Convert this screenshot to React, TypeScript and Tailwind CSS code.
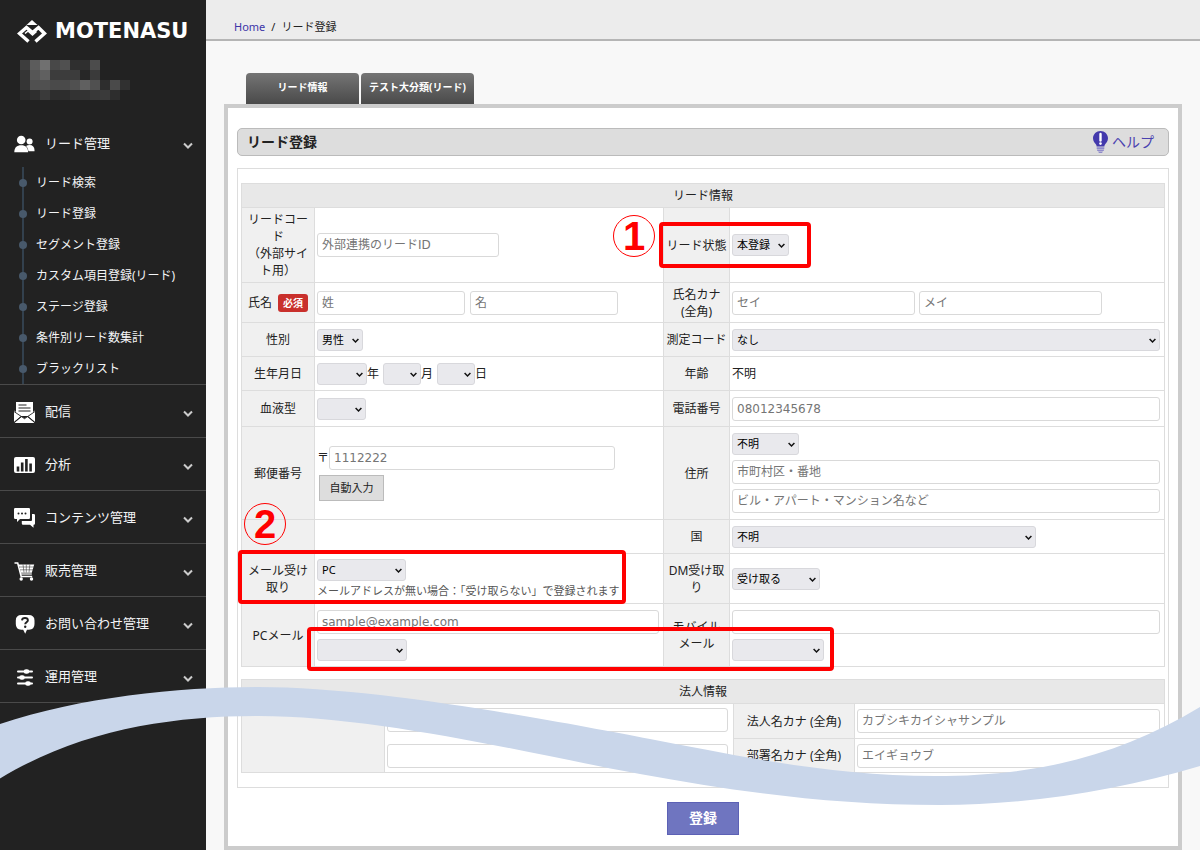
import type { ReactNode } from "react";
import { clsx } from "clsx";

const SUB_ITEMS = [
  "リード検索",
  "リード登録",
  "セグメント登録",
  "カスタム項目登録(リード)",
  "ステージ登録",
  "条件別リード数集計",
  "ブラックリスト",
];

// 10px cells of the masked account name
const MOSAIC = [
  ["#3d3d3d", "#5c5c5c", "#707070", "#484848", "#505050", "#2f2f2f", "#2f2f2f", "#4c4c4c"],
  ["#353535", "#565656", "#606060", "#3c3c3c", "#3c3c3c", "#3c3c3c", "#272727", "#3a3a3a"],
  ["#353535", "#505050", "#505050", "#4a4a4a", "#4a4a4a", "#505050", "#606060", "#505050", "#2d2d2d", "#4a4a4a", "#303030"],
  ["#2a2a2a", "#2f2f2f", "#3a3a3a", "#2d2d2d", "#2d2d2d", "#333333", "#333333", "#383838", "#3a3a3a", "#2d2d2d"],
];

function UsersIcon() {
  return (
    <svg width="21" height="18" viewBox="0 0 21 18" fill="#fff">
      <circle cx="15.6" cy="6.4" r="3" />
      <path d="M14.4 16.2c-.2-2.500-1-4.100-2.400-5.300 1-.7 2.300-1 3.600-1 3.200 0 4.900 2 4.900 5v1.300z" />
      <circle cx="7.200" cy="5" r="4.300" />
      <path d="M.3 17.300c0-4.400 2.400-7 6.900-7s6.900 2.600 6.900 7z" />
    </svg>
  );
}

function MailIcon() {
  return (
    <svg width="21" height="21" viewBox="0 0 21 21">
      <path d="M2 0h17v14H2z" fill="#fff" />
      <path d="M4.500 3h8M4.500 6h12M4.500 9h12" stroke="#222" strokeWidth="1.200" />
      <path d="M0 8.500l7 5.500-7 6zM21 8.500L14 14l7 6z" fill="#fff" />
      <path d="M.5 21l7.200-6.500 2.800 2 2.800-2L20.500 21z" fill="#fff" />
      <path d="M0 9.500l10.500 7.200L21 9.500M.3 20.200l7.300-5.700M20.700 20.200l-7.300-5.700" fill="none" stroke="#222" strokeWidth=".9" />
    </svg>
  );
}

function ChartIcon() {
  return (
    <svg width="21" height="16" viewBox="0 0 21 16">
      <rect width="21" height="16" rx="2" fill="#fff" />
      <path d="M4 14.500V9.500M8.200 14.500V5.500M12.400 14.500V2M16.600 14.500V6.500" stroke="#222" strokeWidth="2.600" />
    </svg>
  );
}

function CommentsIcon() {
  return (
    <svg width="21" height="20" viewBox="0 0 21 20" fill="#fff">
      <path d="M1.200 0h13.600q1.200 0 1.200 1.200v8.600q0 1.200-1.200 1.200H6l-3 3v-3H1.200Q0 11 0 9.800V1.200Q0 0 1.200 0z" />
      <path d="M18 6h1.800q1.200 0 1.200 1.200v8.300q0 1.200-1.200 1.200h-.3v3l-3.500-3H9q-1.200 0-1.200-1.200v-2.500H17q1 0 1-1z" />
      <circle cx="4.500" cy="5.500" r="1" fill="#222" />
      <circle cx="8" cy="5.500" r="1" fill="#222" />
      <circle cx="11.500" cy="5.500" r="1" fill="#222" />
    </svg>
  );
}

function CartIcon() {
  return (
    <svg width="21" height="19" viewBox="0 0 21 19" fill="none" stroke="#fff">
      <path d="M.5 1h3.200l3.500 13.500h11" strokeWidth="1.600" />
      <path d="M4.500 2.500h15.700l-2.400 8.300H6.800z" fill="#fff" stroke="none" />
      <path d="M5 5h15M6 7.800h13M9 2.500l1 8M12.300 2.500v8M15.800 2.500l-.8 8" stroke="#222" strokeWidth=".5" />
      <path d="M6.500 12h11.300" strokeWidth="1.200" />
      <circle cx="7.200" cy="17" r="1.700" fill="#fff" stroke="none" />
      <circle cx="17.500" cy="17" r="1.700" fill="#fff" stroke="none" />
    </svg>
  );
}

function QuestionIcon() {
  return (
    <svg width="20" height="19" viewBox="0 0 20 19">
      <path d="M6.500 0h7q6 0 6 5.500v3.500q0 5.500-5.500 5.800h-2l-1.800 4-2-4h-2Q.8 14.500.8 9V5.500Q.8 0 6.500 0z" fill="#fff" />
      <path d="M7 5.300Q7.200 3 10 3t2.900 2.300c0 2-2.700 2-2.700 4" fill="none" stroke="#222" strokeWidth="1.900" />
      <circle cx="10.200" cy="11.700" r="1.200" fill="#222" />
    </svg>
  );
}

function SlidersIcon() {
  return (
    <svg width="16" height="17" viewBox="0 0 16 17" stroke="#fff" strokeWidth="2" strokeLinecap="round">
      <path d="M1 2.500h14M1 8.500h14M1 14.500h14" />
      <path d="M9 2.500h1M4.500 8.500h1M10.500 14.500h1" strokeWidth="4.600" />
    </svg>
  );
}

const MENU: { label: string; icon: ReactNode }[] = [
  { label: "配信", icon: <MailIcon /> },
  { label: "分析", icon: <ChartIcon /> },
  { label: "コンテンツ管理", icon: <CommentsIcon /> },
  { label: "販売管理", icon: <CartIcon /> },
  { label: "お問い合わせ管理", icon: <QuestionIcon /> },
  { label: "運用管理", icon: <SlidersIcon /> },
];

function MenuButton({ label, icon }: { label: string; icon: ReactNode }) {
  return (
    <button type="button" className="flex h-[52px] w-full items-center pt-0.5 pr-[13px] pl-3.5 text-left text-[13px] text-gray-100">
      <span className="mr-2.5 flex w-[21px] justify-center">{icon}</span>
      <span className="flex-1">{label}</span>
      <svg width="10" height="8" viewBox="0 0 10 8" className="mt-1" fill="none" stroke="#ccc" strokeWidth="2">
        <path d="M1 1.500l4 4 4-4" />
      </svg>
    </button>
  );
}

function Sidebar() {
  return (
    <aside className="w-[206px] shrink-0 bg-[#222]">
      <a href="#" className="flex h-[60px] items-center gap-2 pt-0.5 pl-[17px] text-white">
        <svg width="30" height="23" viewBox="0 0 30 23" fill="none" stroke="#fff" strokeWidth="3.400">
          <path d="M15 0l5.500 5H9.500z" fill="#fff" stroke="none" />
          <path d="M11.500 21.500L2.500 13.500 9.500 7.500l6 5 6-5 6 6-9 8" />
          <path d="M8 13.500l3-2.500 4.500 4 4-3.500" strokeWidth="1.600" />
        </svg>
        <span className="font-['DejaVu_Sans',sans-serif] text-[21px] leading-6 font-bold">MOTENASU</span>
      </a>
      <svg width="120" height="40" className="ml-5" shapeRendering="crispEdges">
        {MOSAIC.map((row, y) =>
          row.map((fill, x) => <rect key={`${x}-${y}`} x={x * 10} y={y * 10} width="10" height="10" fill={fill} />)
        )}
      </svg>
      <nav className="mt-[17px]">
        <MenuButton label="リード管理" icon={<UsersIcon />} />
        <ul className="relative -mt-0.5 pl-9 before:absolute before:top-0 before:bottom-0 before:left-[22px] before:w-0.5 before:bg-[#33414e]">
          {SUB_ITEMS.map((item) => (
            <li key={item} className="relative flex h-[31px] items-center">
              <span className="absolute -left-[17px] size-2 rounded-full bg-[#48596b]" />
              <a href="#" className="text-xs text-gray-100">{item}</a>
            </li>
          ))}
        </ul>
        {MENU.map((m) => (
          <div key={m.label} className="border-t border-[#4a4a4a]">
            <MenuButton label={m.label} icon={m.icon} />
          </div>
        ))}
        <div className="border-t border-[#4a4a4a]" />
      </nav>
    </aside>
  );
}

function Select({ id, label, value = "", className }: { id?: string; label?: string; value?: string; className?: string }) {
  return (
    <span className={clsx("relative inline-flex h-[22px] align-middle", className)}>
      <select
        id={id}
        aria-label={label}
        className="h-full w-full appearance-none rounded-[3px] border border-[#d8d8dc] bg-[#e9e9ed] pr-4 pl-1 text-[11px] leading-4 text-black"
      >
        <option>{value}</option>
      </select>
      <svg width="7" height="6" viewBox="0 0 7 6" className="pointer-events-none absolute top-[9px] right-1" fill="none" stroke="#111" strokeWidth="1.500">
        <path d="M.6 1l2.900 3L6.400 1" />
      </svg>
    </span>
  );
}

function TextInput({ id, label, placeholder, className }: { id?: string; label?: string; placeholder?: string; className?: string }) {
  return (
    <input
      type="text"
      id={id}
      aria-label={label}
      placeholder={placeholder}
      className={clsx(
        "h-6 rounded-[3px] border border-[#d9d9d9] bg-white px-1 font-['DejaVu_Sans','Noto_Sans_CJK_JP',sans-serif] text-xs placeholder:text-[#757575]",
        className
      )}
    />
  );
}

function Th({ children, htmlFor, rowSpan }: { children?: ReactNode; htmlFor?: string; rowSpan?: number }) {
  return (
    <th rowSpan={rowSpan} className="relative border border-[#ddd] bg-[#f0f0f0] px-0.5 text-center text-xs leading-[17px] font-normal">
      {htmlFor ? <label htmlFor={htmlFor}>{children}</label> : children}
    </th>
  );
}

function Td({ children, rowSpan }: { children?: ReactNode; rowSpan?: number }) {
  return (
    <td rowSpan={rowSpan} className="relative border border-[#ddd] pr-1 pl-0.5 text-xs leading-[17px]">
      {children}
    </td>
  );
}

function Frame({ className }: { className: string }) {
  return <span className={clsx("pointer-events-none absolute z-10 rounded-[4px] border-4 border-[#f00]", className)} />;
}

function Marker({ n, className }: { n: number; className: string }) {
  return (
    <span
      className={clsx(
        "pointer-events-none absolute z-10 flex size-[42px] items-center justify-center rounded-full border border-[#f00] font-['Liberation_Sans',sans-serif] text-[40px] leading-none font-bold text-[#f00]",
        className
      )}
    >
      {n}
    </span>
  );
}

function LeadTable() {
  return (
    <table className="w-full table-fixed border-collapse">
      <colgroup>
        <col className="w-[73px]" />
        <col className="w-[349px]" />
        <col className="w-[66px]" />
        <col />
      </colgroup>
      <tbody>
        <tr className="h-6">
          <th colSpan={4} className="border border-[#ddd] bg-[#e8e8e8] text-xs leading-[17px] font-normal">リード情報</th>
        </tr>
        <tr className="h-[75px]">
          <Th htmlFor="lead-code">リードコード<br />（外部サイト用）</Th>
          <Td><TextInput id="lead-code" placeholder="外部連携のリードID" className="w-[182px]" /></Td>
          <Th>
            <label htmlFor="lead-state">リード状態</label>
            <Frame className="top-[14px] -left-[5px] h-[46px] w-[152px]" />
            <Marker n={1} className="top-[7px] -left-[51px]" />
          </Th>
          <Td><Select id="lead-state" value="本登録" className="w-[57px]" /></Td>
        </tr>
        <tr className="h-10">
          <Th htmlFor="last-name">
            氏名
            <span className="ml-1.5 inline-block rounded-[3px] bg-[#c9302c] px-[5px] text-[10px] leading-[18px] font-bold text-white">必須</span>
          </Th>
          <Td>
            <div className="flex gap-[5px]">
              <TextInput id="last-name" placeholder="姓" className="w-[148px]" />
              <TextInput label="名" placeholder="名" className="w-[148px]" />
            </div>
          </Td>
          <Th htmlFor="last-kana">氏名カナ<br />(全角)</Th>
          <Td>
            <div className="flex gap-1">
              <TextInput id="last-kana" placeholder="セイ" className="w-[183px]" />
              <TextInput label="メイ" placeholder="メイ" className="w-[183px]" />
            </div>
          </Td>
        </tr>
        <tr className="h-[34px]">
          <Th htmlFor="gender">性別</Th>
          <Td><Select id="gender" value="男性" className="w-[46px]" /></Td>
          <Th htmlFor="measure">測定コード</Th>
          <Td><Select id="measure" value="なし" className="w-full" /></Td>
        </tr>
        <tr className="h-[34px]">
          <Th htmlFor="birth-year">生年月日</Th>
          <Td>
            <div className="flex items-center">
              <Select id="birth-year" className="w-[50px]" />
              <span className="mr-1">年</span>
              <Select label="月" className="w-[38px]" />
              <span className="mr-1">月</span>
              <Select label="日" className="w-[38px]" />
              <span>日</span>
            </div>
          </Td>
          <Th>年齢</Th>
          <Td>不明</Td>
        </tr>
        <tr className="h-9">
          <Th htmlFor="blood">血液型</Th>
          <Td><Select id="blood" className="w-[49px]" /></Td>
          <Th htmlFor="phone">電話番号</Th>
          <Td><TextInput id="phone" placeholder="08012345678" className="w-full" /></Td>
        </tr>
        <tr className="h-[93px]">
          <Th htmlFor="zip">郵便番号</Th>
          <Td>
            <div className="flex items-center">
              <span>〒</span>
              <TextInput id="zip" placeholder="1112222" className="w-[286px]" />
            </div>
            <button type="button" className="mt-[5px] ml-0.5 block h-[26px] w-[65px] border border-[#bbb] bg-[#ddd] text-[11px]">自動入力</button>
          </Td>
          <Th htmlFor="pref">住所</Th>
          <Td>
            <div className="flex flex-col items-start gap-[5px]">
              <Select id="pref" value="不明" className="w-[67px]" />
              <TextInput label="市町村区・番地" placeholder="市町村区・番地" className="w-full" />
              <TextInput label="建物名" placeholder="ビル・アパート・マンション名など" className="w-full" />
            </div>
          </Td>
        </tr>
        <tr className="h-[34px]">
          <Th />
          <Td />
          <Th htmlFor="country">国</Th>
          <Td><Select id="country" value="不明" className="w-[304px]" /></Td>
        </tr>
        <tr className="h-[50px]">
          <Th>
            <label htmlFor="mail-opt">メール受け取り</label>
            <Frame className="-top-1 -left-1 h-[54px] w-[388px]" />
            <Marker n={2} className="-top-[51px] left-0.5" />
          </Th>
          <Td>
            <Select id="mail-opt" value="PC" className="w-[89px]" />
            <p className="pt-0.5 text-[11px] leading-4 text-[#555]">メールアドレスが無い場合：「受け取らない」で登録されます</p>
          </Td>
          <Th htmlFor="dm">DM受け取り</Th>
          <Td><Select id="dm" value="受け取る" className="w-[88px]" /></Td>
        </tr>
        <tr className="h-[63px]">
          <Th htmlFor="pc-mail">PCメール</Th>
          <Td>
            <div className="flex flex-col items-start gap-[5px]">
              <TextInput id="pc-mail" placeholder="sample@example.com" className="w-full" />
              <Select label="PCメール種別" className="w-[90px]" />
            </div>
            <Frame className="top-[23px] -left-2 h-[44px] w-[527px]" />
          </Td>
          <Th htmlFor="mobile-mail">モバイル<br />メール</Th>
          <Td>
            <div className="flex flex-col items-start gap-[5px]">
              <TextInput id="mobile-mail" className="w-full" />
              <Select label="モバイルメール種別" className="w-[92px]" />
            </div>
          </Td>
        </tr>
      </tbody>
    </table>
  );
}

function CompanyTable() {
  return (
    <table className="mt-3 w-full table-fixed border-collapse">
      <colgroup>
        <col className="w-[143px]" />
        <col className="w-[349px]" />
        <col className="w-[121px]" />
        <col />
      </colgroup>
      <tbody>
        <tr className="h-6">
          <th colSpan={4} className="border border-[#ddd] bg-[#e8e8e8] text-xs leading-[17px] font-normal">法人情報</th>
        </tr>
        <tr className="h-[35px]">
          <Th rowSpan={2} />
          <Td rowSpan={2}>
            <div className="flex flex-col gap-3">
              <TextInput label="法人名" className="w-[341px]" />
              <TextInput label="部署名" className="w-[341px]" />
            </div>
          </Td>
          <Th htmlFor="company-kana">法人名カナ (全角)</Th>
          <Td><TextInput id="company-kana" placeholder="カブシキカイシャサンプル" className="w-full" /></Td>
        </tr>
        <tr className="h-[34px]">
          <Th htmlFor="dept-kana">部署名カナ (全角)</Th>
          <Td><TextInput id="dept-kana" placeholder="エイギョウブ" className="w-full" /></Td>
        </tr>
      </tbody>
    </table>
  );
}

export default function App() {
  return (
    <div className="relative flex min-h-screen overflow-hidden bg-[#f8f8f8] font-['Noto_Sans','Noto_Sans_CJK_JP',sans-serif] text-[#222]">
      <Sidebar />
      <div className="min-w-0 flex-1">
        <header className="flex h-[41px] items-center border-b-2 border-[#b5b5b5] bg-[#ececec] px-7 pt-4 text-[11px]">
          <a href="#" className="text-[#3d35a8]">Home</a>
          <span className="mx-1.5">/</span>
          <span>リード登録</span>
        </header>

        <main className="px-[18px] pt-8">
          {/* Tabs */}
          <div className="ml-[22px] flex gap-0.5">
            {["リード情報", "テスト大分類(リード)"].map((tab) => (
              <button
                key={tab}
                type="button"
                className="h-[31px] w-[113px] rounded-t-[4px] bg-linear-to-b from-[#757575] to-[#4a4a4a] pb-0.5 text-[10px] font-bold whitespace-nowrap text-white"
              >
                {tab}
              </button>
            ))}
          </div>

          {/* Form panel */}
          <div className="border-4 border-[#ccc] bg-white px-[9px] pt-5 pb-[11px]">
            <div className="flex h-7 items-center justify-between rounded-[5px] border border-[#bbb] bg-[#ddd] pr-3.5 pl-[9px]">
              <h1 className="text-sm leading-5 font-bold">リード登録</h1>
              <a href="#" className="flex items-center gap-1 text-sm leading-5 text-[#4a42b0]">
                <svg width="15" height="22" viewBox="0 0 15 22">
                  <path d="M7.500 0C11.600 0 15 3.100 15 7.300c0 3-1.800 4.700-3 6.200-.5.700-.6 1.500-.6 2H3.600c0-.5-.1-1.300-.6-2-1.200-1.500-3-3.200-3-6.200C0 3.100 3.400 0 7.500 0z" fill="#4339ac" />
                  <path d="M7.500 3v6.500" stroke="#fff" strokeWidth="2.400" strokeLinecap="round" />
                  <circle cx="7.500" cy="12.600" r="1.300" fill="#fff" />
                  <path d="M3.700 16.200h7.600v1.800H3.700zM3.900 18.500h7.200l-.4 1.500H4.300zM5 20.400h5L9 22H6z" fill="#8f8acb" />
                </svg>
                ヘルプ
              </a>
            </div>

            <form>
              <div className="mt-3 border border-[#ddd] px-[3px] py-3.5">
                <LeadTable />
                <CompanyTable />
              </div>
              <div className="mt-3.5 flex justify-center">
                <button type="button" className="h-[33px] w-[72px] border border-[#5c61b5] bg-[#6f75c0] pb-0.5 text-sm font-bold text-white">
                  登録
                </button>
              </div>
            </form>
          </div>
        </main>
      </div>

      {/* Wave that marks the omitted part of the page */}
      <svg
        className="pointer-events-none absolute top-[680px] left-0 z-20 h-[130px] w-full"
        viewBox="0 680 1200 130"
        preserveAspectRatio="none"
        fill="#c9d6ea"
      >
        <path d="M0 724C80 697 180 687 258 687C380 687 560 722 650 739C740 756 830 776 935 776C1040 776 1120 755 1200 707V766C1120 790 1030 805 940 805C830 805 740 792 640 774C540 756 380 716 258 716C170 716 80 730 0 778.500z" />
      </svg>
    </div>
  );
}
